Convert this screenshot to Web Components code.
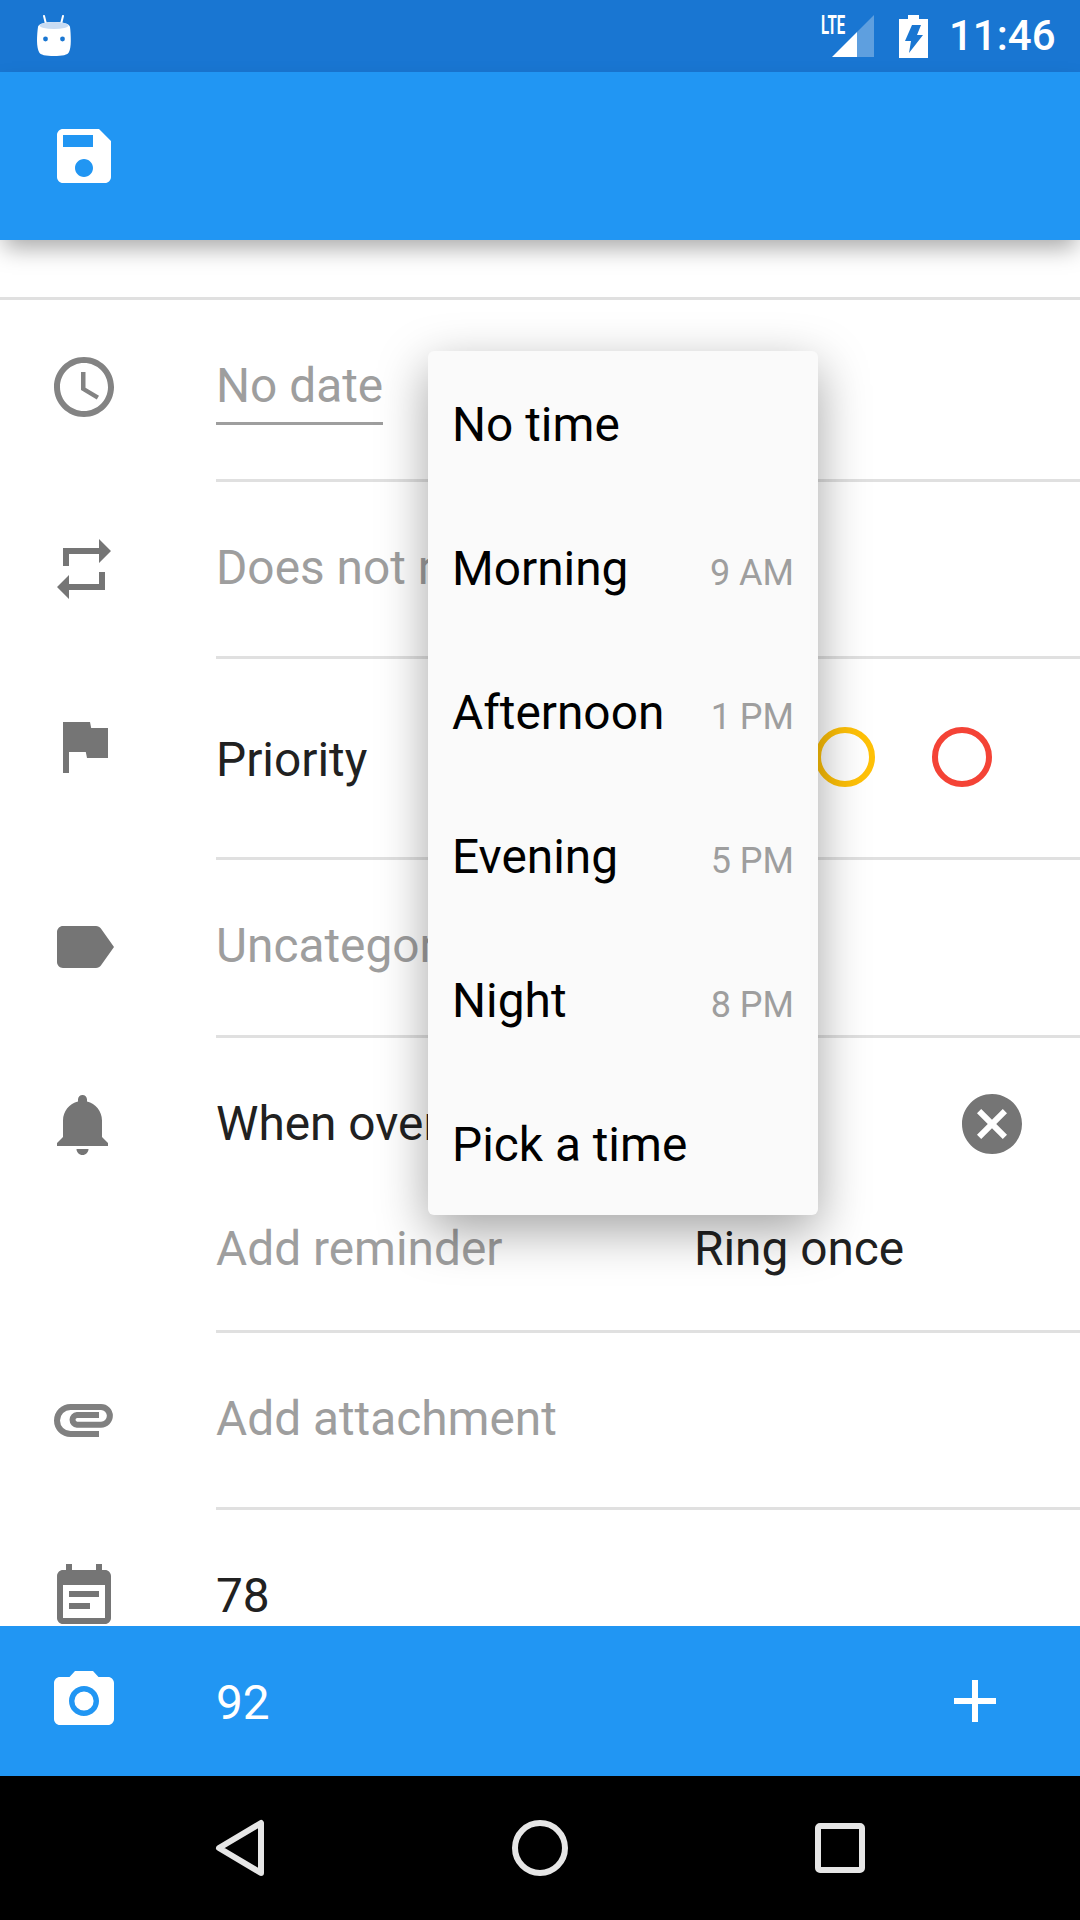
<!DOCTYPE html>
<html>
<head>
<meta charset="utf-8">
<style>
  html, body { margin: 0; padding: 0; background: #fff; }
  body { font-family: Roboto, "Liberation Sans", sans-serif; }
</style>
</head>
<body>
<task-screen>
  <status-bar slot="top"></status-bar>
  <app-bar slot="top"></app-bar>

  <task-form>
    <task-row icon="clock" color="#838383" h="182">
      <date-field>No date</date-field>
    </task-row>
    <task-row icon="repeat" h="177"><span class="hint">Does not repeat</span></task-row>
    <task-row icon="flag" h="201" pad="65">
      <priority-row>Priority</priority-row>
    </task-row>
    <task-row icon="label" h="178"><span class="hint">Uncategorized</span></task-row>
    <task-row icon="bell" h="295">
      <reminder-block></reminder-block>
    </task-row>
    <task-row icon="attach" color="#808080" h="177" icon-top="52"><span class="hint">Add attachment</span></task-row>
    <task-row icon="note" h="200">78</task-row>
  </task-form>

  <bottom-bar slot="bottom">92</bottom-bar>
  <nav-bar slot="bottom"></nav-bar>

  <time-menu slot="over">
    <time-item>No time</time-item>
    <time-item hint="9 AM">Morning</time-item>
    <time-item hint="1 PM">Afternoon</time-item>
    <time-item hint="5 PM">Evening</time-item>
    <time-item hint="8 PM">Night</time-item>
    <time-item>Pick a time</time-item>
  </time-menu>
</task-screen>

<script>
(function() {
    // material icon paths, 24 unit grid
    const ICONS = {
        clock: 'M11.99 2C6.47 2 2 6.48 2 12s4.47 10 9.99 10C17.52 22 22 17.52 22 12S17.52 2 11.99 2zM12 20c-4.42 0-8-3.58-8-8s3.58-8 8-8 8 3.58 8 8-3.58 8-8 8zm.5-13H11v6l5.25 3.15.75-1.23-4.5-2.67z',
        repeat: 'M7 7h10v3l4-4-4-4v3H5v6h2V7zm10 10H7v-3l-4 4 4 4v-3h12v-6h-2v4z',
        flag: 'M14.4 6L14 4H5v17h2v-7h5.6l.4 2h7V6z',
        label: 'M17.63 5.84C17.27 5.33 16.67 5 16 5L5 5.01C3.9 5.01 3 5.9 3 7v10c0 1.1.9 1.99 2 1.99L16 19c.67 0 1.27-.33 1.63-.84L22 12l-4.37-6.16z',
        bell: 'M11.5 22c1.1 0 2-.9 2-2h-4c0 1.1.9 2 2 2zm6.5-6v-5.5c0-3.07-2.13-5.64-5-6.32V3.5c0-.83-.67-1.5-1.5-1.5S10 2.67 10 3.5v.68c-2.87.68-5 3.25-5 6.32V16l-2 2v1h17v-1l-2-2z',
        note: 'M17 10H7v2h10v-2zm2-7h-1V1h-2v2H8V1H6v2H5c-1.11 0-1.99.9-1.99 2L3 19c0 1.1.89 2 2 2h14c1.1 0 2-.9 2-2V5c0-1.1-.9-2-2-2zm0 16H5V8h14v11zm-5-5H7v2h7v-2z',
        save: 'M17 3H5c-1.11 0-2 .9-2 2v14c0 1.1.89 2 2 2h14c1.1 0 2-.9 2-2V7l-4-4zm-5 16c-1.66 0-3-1.34-3-3s1.34-3 3-3 3 1.34 3 3-1.34 3-3 3zm3-10H5V5h10v4z',
        camera: 'M12 15.2a3.2 3.2 0 1 0 0-6.4 3.2 3.2 0 0 0 0 6.4zM9 2L7.17 4H4c-1.1 0-2 .9-2 2v12c0 1.1.9 2 2 2h16c1.1 0 2-.9 2-2V6c0-1.1-.9-2-2-2h-3.17L15 2H9zm3 15c-2.76 0-5-2.24-5-5s2.24-5 5-5 5 2.24 5 5-2.24 5-5 5z',
        add: 'M19 13h-6v6h-2v-6H5v-2h6V5h2v6h6v2z',
        cancel: 'M12 2C6.47 2 2 6.47 2 12s4.47 10 10 10 10-4.47 10-10S17.53 2 12 2zm5 13.59L15.59 17 12 13.41 8.41 17 7 15.59 10.59 12 7 8.41 8.41 7 12 10.59 15.59 7 17 8.41 13.41 12 17 15.59z'
    };
    // the paperclip on this screen is a plain stroke, not the stock filled shape
    const STROKED = {
        attach: 'M17 16.33H7.5A4.5 4.5 0 0 1 7.5 7.33H17.67A2.95 2.95 0 0 1 17.67 13.23H9.67A1.62 1.62 0 0 1 9.67 10H17'
    };

    function shadow(el, html) {
        el.attachShadow({ mode: 'open' }).innerHTML = html;
    }

    class MdIcon extends HTMLElement {
        connectedCallback() {
            if (this.shadowRoot) return;
            const name = this.getAttribute('name');
            const color = this.getAttribute('color') || '#757575';
            const path = STROKED[name]
                ? `<path d="${STROKED[name]}" fill="none" stroke="${color}" stroke-width="2"/>`
                : `<path d="${ICONS[name]}" fill="${color}"/>`;
            shadow(this, `<style>
                :host { display: block; width: 72px; height: 72px; flex: none; }
                svg { display: block; width: 72px; height: 72px; }
            </style><svg viewBox="0 0 24 24">${path}</svg>`);
        }
    }

    class TaskScreen extends HTMLElement {
        constructor() {
            super();
            shadow(this, `<style>
                :host { display: flex; flex-direction: column; position: relative; width: 1080px; height: 1920px; overflow: hidden; background: #fff; color: #212121; font: 47.8px/72px Roboto, "Liberation Sans", sans-serif; }
                main { flex: 1; min-height: 0; overflow: hidden; display: flex; flex-direction: column; }
            </style>
            <slot name="top"></slot>
            <main><slot></slot></main>
            <slot name="bottom"></slot>
            <slot name="over"></slot>`);
        }
    }

    class StatusBar extends HTMLElement {
        constructor() {
            super();
            shadow(this, `<style>
                :host { display: flex; align-items: center; height: 72px; background: #1976D2; color: #fff; padding: 0 28px 0 37px; flex: none; }
                .bot { width: 34px; height: 42px; margin-top: -1px; }
                .gap { flex: 1; }
                .sig { position: relative; width: 53px; height: 44px; margin-top: -1px; }
                .sig svg { display: block; width: 53px; height: 44px; }
                .lte { position: absolute; left: 0; top: 0; font: 700 25px/24px Roboto, sans-serif; transform: scaleX(.6); transform-origin: 0 0; }
                .bat { width: 29px; height: 43px; margin-left: 25px; }
                .time { font: 500 42px/72px Roboto, sans-serif; margin-left: 21px; width: 103px; }
            </style>
            <svg class="bot" viewBox="0 0 34 42">
                <path d="M7 1l2 8M26 1l-2 8" stroke="#fff" stroke-width="2" stroke-linecap="round" fill="none"/>
                <path d="M1 12c0-3 7-5 16-5s16 2 16 5c.5 3 .8 9 .8 14 0 5-.8 9-1.8 11-1 3-7 4-15 4S3 40 2 37c-1-2-2-6-2-11 0-5 .5-11 1-14z" fill="#fff"/>
                <ellipse cx="17" cy="10.500" rx="14.500" ry="3.500" fill="#c9dcf3"/>
                <circle cx="8.500" cy="24" r="2.400" fill="#1976D2"/><circle cx="25.500" cy="24" r="2.400" fill="#1976D2"/>
            </svg>
            <span class="gap"></span>
            <div class="sig">
                <svg viewBox="0 0 53 44">
                    <path d="M53 1v42H36V18z" fill="#fff" fill-opacity=".3"/>
                    <path d="M11 43l25-25v25z" fill="#fff"/>
                </svg>
                <span class="lte">LTE</span>
            </div>
            <svg class="bat" viewBox="0 0 29 43">
                <path d="M9 0h11v4h9v39H0V4h9z" fill="#fff"/>
                <path d="M10 38l2-12H6L13 10h9l-4 10h6z" fill="#1976D2"/>
            </svg>
            <span class="time">11:46</span>`);
        }
    }

    class AppBar extends HTMLElement {
        constructor() {
            super();
            shadow(this, `<style>
                :host { display: flex; align-items: center; height: 168px; padding-left: 48px; background: #2196F3; flex: none; position: relative; z-index: 1; box-shadow: 0 12px 22px -4px rgba(0,0,0,.34); }
            </style><md-icon name="save" color="#fff"></md-icon>`);
        }
    }

    class TaskForm extends HTMLElement {
        constructor() {
            super();
            shadow(this, `<style>
                :host { display: block; padding-top: 57px; }
                .rule { height: 3px; background: #e0e0e0; }
            </style><div class="rule"></div><slot></slot>`);
        }
    }

    class TaskRow extends HTMLElement {
        connectedCallback() {
            if (this.shadowRoot) return;
            const h = this.getAttribute('h');
            const top = this.getAttribute('icon-top') || 51;
            const pad = this.getAttribute('pad') || 50;
            const color = this.getAttribute('color') || '#757575';
            shadow(this, `<style>
                :host { display: flex; height: ${h}px; box-sizing: border-box; }
                .ic { width: 216px; box-sizing: border-box; padding: ${top}px 0 0 48px; flex: none; }
                .body { flex: 1; min-width: 0; border-bottom: 3px solid #e0e0e0; padding-top: ${pad}px; }
                ::slotted(.hint) { color: #9e9e9e; }
            </style>
            <div class="ic"><md-icon name="${this.getAttribute('icon')}" color="${color}"></md-icon></div>
            <div class="body"><slot></slot></div>`);
        }
    }

    class DateField extends HTMLElement {
        constructor() {
            super();
            shadow(this, `<style>
                :host { display: inline-block; color: #9e9e9e; border-bottom: 3px solid #9e9e9e; }
            </style><slot></slot>`);
        }
    }

    class PriorityRow extends HTMLElement {
        constructor() {
            super();
            shadow(this, `<style>
                :host { display: flex; align-items: center; justify-content: space-between; padding-right: 88px; }
                .dots { display: flex; gap: 57px; margin-top: -6px; }
                i { display: block; width: 60px; height: 60px; box-sizing: border-box; border-radius: 50%; border: 6px solid; }
            </style>
            <slot></slot>
            <div class="dots">
                <i style="border-color:#9e9e9e"></i>
                <i style="border-color:#2196F3"></i>
                <i style="border-color:#FFC107"></i>
                <i style="border-color:#F44336"></i>
            </div>`);
        }
    }

    class ReminderBlock extends HTMLElement {
        constructor() {
            super();
            shadow(this, `<style>
                :host { display: block; }
                .row { display: flex; align-items: center; height: 72px; }
                .when { flex: 1; }
                .x { margin-right: 52px; }
                .second { margin-top: 53px; }
                .add { color: #9e9e9e; width: 478px; }
            </style>
            <div class="row"><span class="when">When overdue</span><md-icon class="x" name="cancel"></md-icon></div>
            <div class="row second"><span class="add">Add reminder</span><span>Ring once</span></div>`);
        }
    }

    class BottomBar extends HTMLElement {
        constructor() {
            super();
            shadow(this, `<style>
                :host { display: flex; align-items: center; height: 150px; flex: none; background: #2196F3; color: #fff; padding: 0 69px 0 48px; }
                .txt { flex: 1; margin-left: 96px; padding-top: 3px; }
            </style>
            <md-icon name="camera" color="#fff"></md-icon>
            <span class="txt"><slot></slot></span>
            <md-icon name="add" color="#fff"></md-icon>`);
        }
    }

    class NavBar extends HTMLElement {
        constructor() {
            super();
            shadow(this, `<style>
                :host { display: flex; align-items: center; justify-content: center; gap: 228px; height: 144px; flex: none; background: #000; }
                svg { display: block; width: 72px; height: 72px; fill: none; stroke: #e6e6e6; stroke-width: 6; stroke-linejoin: round; }
            </style>
            <svg viewBox="0 0 72 72"><path d="M57 11v50L15 36z"/></svg>
            <svg viewBox="0 0 72 72"><circle cx="36" cy="36" r="25"/></svg>
            <svg viewBox="0 0 72 72"><rect x="14" y="14" width="44" height="44" rx="2"/></svg>`);
        }
    }

    class TimeMenu extends HTMLElement {
        constructor() {
            super();
            shadow(this, `<style>
                :host { display: block; position: absolute; left: 428px; top: 351px; width: 390px; background: #fafafa; border-radius: 6px; box-shadow: 0 16px 50px rgba(0,0,0,.36); }
            </style><slot></slot>`);
        }
    }

    class TimeItem extends HTMLElement {
        constructor() {
            super();
            shadow(this, `<style>
                :host { display: flex; align-items: baseline; justify-content: space-between; height: 144px; box-sizing: border-box; padding: 38px 24px 0; color: #000; }
                .h { font-size: 36px; color: #9e9e9e; }
            </style><slot></slot><span class="h"></span>`);
        }
        connectedCallback() {
            this.shadowRoot.querySelector('.h').textContent = this.getAttribute('hint') || '';
        }
    }

    customElements.define('md-icon', MdIcon);
    customElements.define('task-screen', TaskScreen);
    customElements.define('status-bar', StatusBar);
    customElements.define('app-bar', AppBar);
    customElements.define('task-form', TaskForm);
    customElements.define('task-row', TaskRow);
    customElements.define('date-field', DateField);
    customElements.define('priority-row', PriorityRow);
    customElements.define('reminder-block', ReminderBlock);
    customElements.define('bottom-bar', BottomBar);
    customElements.define('nav-bar', NavBar);
    customElements.define('time-menu', TimeMenu);
    customElements.define('time-item', TimeItem);
})();
</script>
</body>
</html>
